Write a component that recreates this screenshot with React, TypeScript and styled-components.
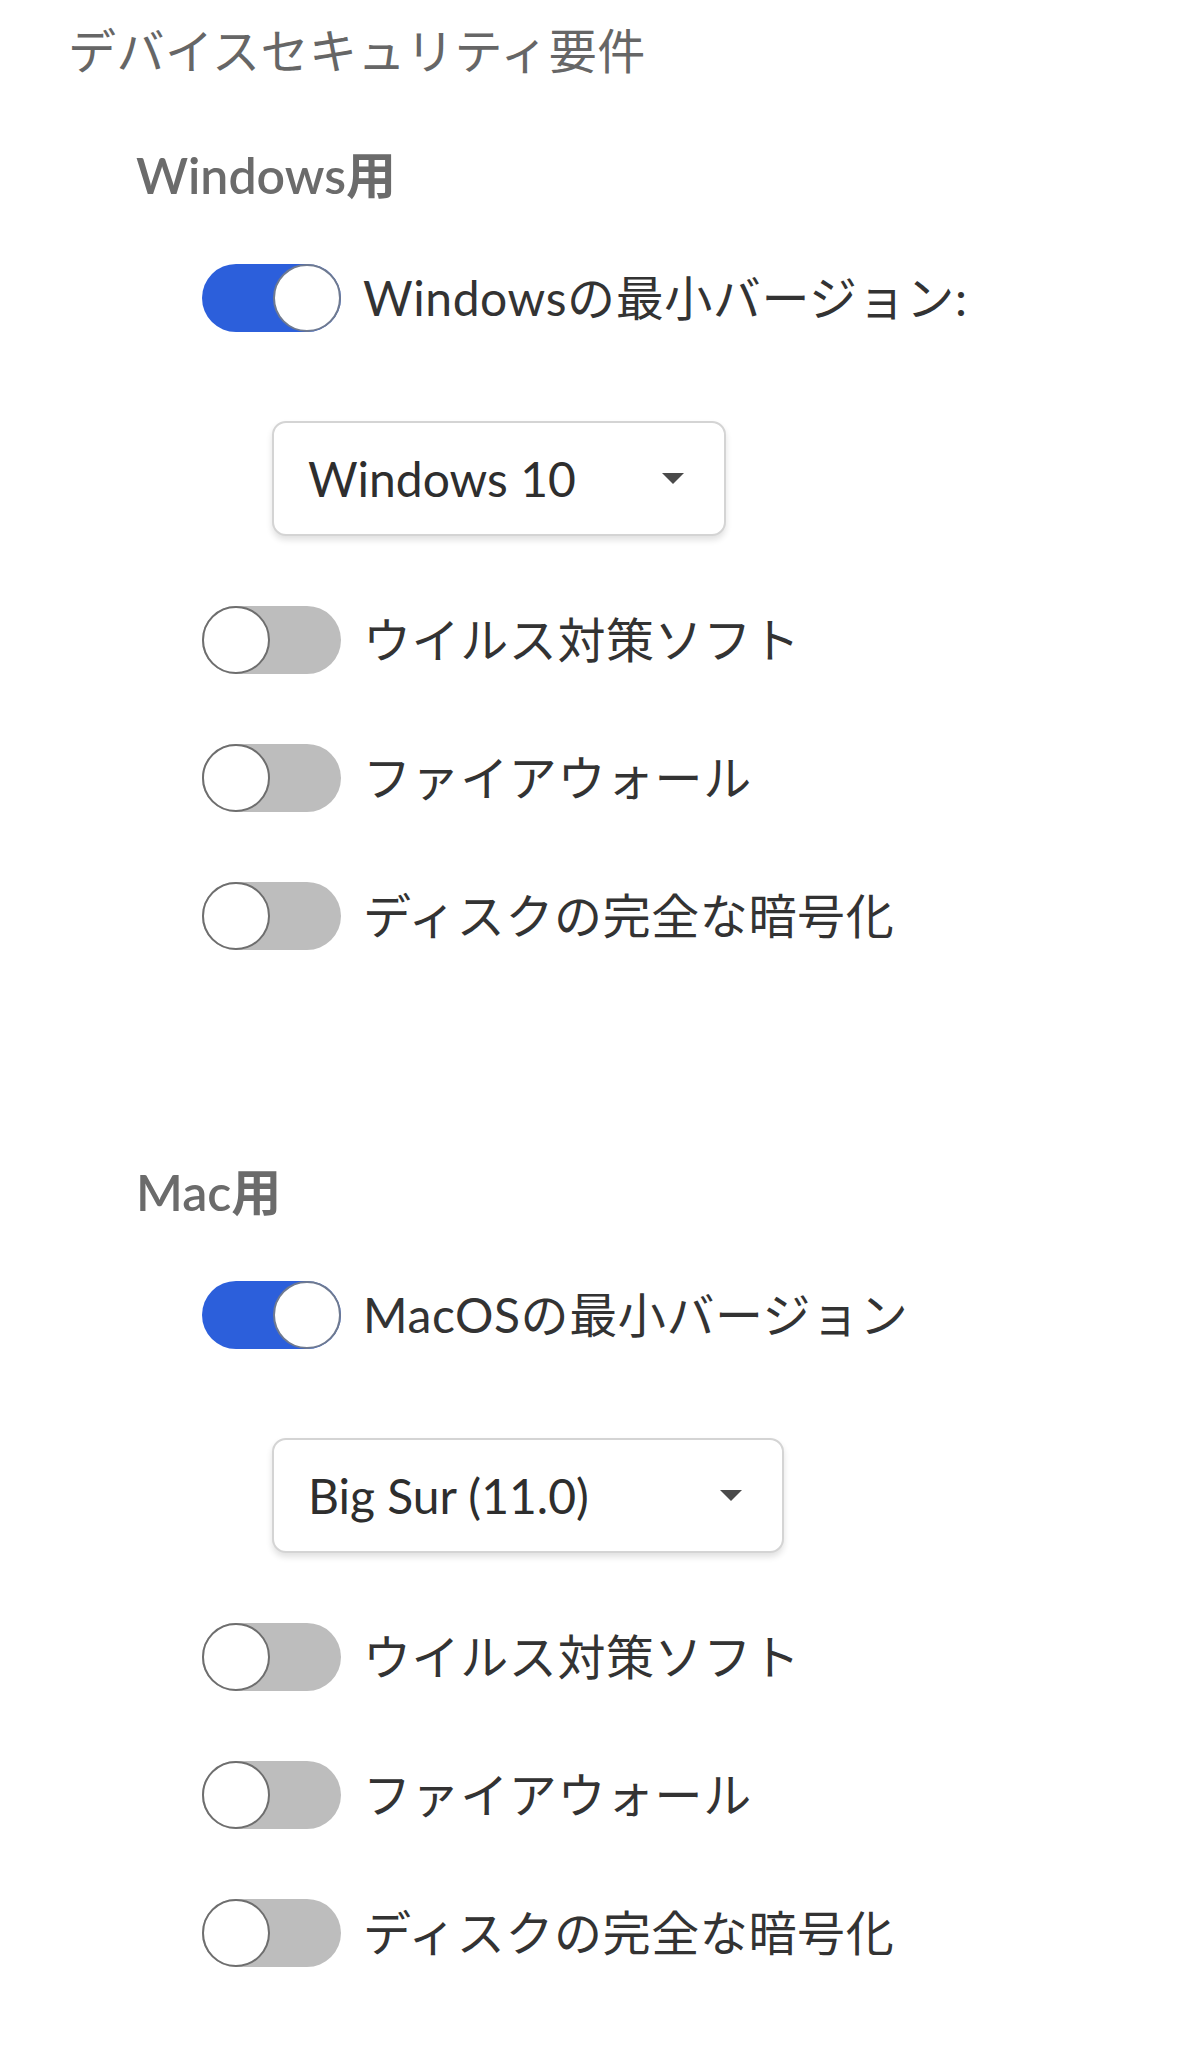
import * as React from 'react';
import styled, { createGlobalStyle } from 'styled-components';

const GlobalStyle = createGlobalStyle`
  body {
    margin: 0;
    background: #ffffff;
    font-family: Lato, 'Noto Sans CJK JP', sans-serif;
  }
`;

const Page = styled.div`
  padding: 20px 0 0 68px;
  display: flex;
  flex-direction: column;
`;
const Title = styled.h2`
  margin: 0;
  font-size: 48px;
  line-height: 62px;
  letter-spacing: 0.5px;
  font-weight: normal;
  color: #666666;
`;
const Section = styled.section<{ $gap: number }>`
  margin-top: ${(p) => p.$gap}px;
  padding-left: 68px;
  display: flex;
  flex-direction: column;
`;
const Heading = styled.h3`
  margin: 0;
  font-size: 50px;
  line-height: 62px;
  font-weight: 600;
  color: #6b6b6b;
`;
const List = styled.div`
  margin-top: 58px;
  padding-left: 66px;
  display: flex;
  flex-direction: column;
  gap: 70px;
`;
const Row = styled.label`
  display: flex;
  align-items: center;
  gap: 22px;
  font-size: 48px;
  letter-spacing: 0.6px;
  color: #333333;
  line-height: 68px;
`;
const Track = styled.span<{ $on: boolean }>`
  flex: none;
  width: 139px;
  height: 68px;
  border-radius: 34px;
  background: ${(p) => (p.$on ? '#2c5fdb' : '#bdbdbd')};
  display: flex;
  justify-content: ${(p) => (p.$on ? 'flex-end' : 'flex-start')};
`;
const Thumb = styled.span<{ $on: boolean }>`
  width: 68px;
  height: 68px;
  box-sizing: border-box;
  border-radius: 50%;
  background: #ffffff;
  border: 2px solid ${(p) => (p.$on ? '#6f7a90' : '#6e6e6e')};
`;
const SelectWrap = styled.div`
  margin-top: 89px;
  padding-left: 70px;
`;
const Select = styled.div<{ $w: number }>`
  width: ${(p) => p.$w}px;
  height: 115px;
  box-sizing: border-box;
  border: 2px solid #d4d4d4;
  border-radius: 14px;
  box-shadow: 0 4px 6px rgba(0, 0, 0, 0.12);
  background: #ffffff;
  display: flex;
  align-items: center;
  justify-content: space-between;
  padding: 0 40px 0 34px;
  font-size: 48px;
  color: #2e2e2e;
`;
const Caret = styled.svg`
  width: 22px;
  height: 11px;
  flex: none;
`;

const Toggle = ({ on }: { on: boolean }) => (
  <Track $on={on}>
    <Thumb $on={on} />
  </Track>
);

interface Item {
  label: string;
  on: boolean;
}

const OsBlock = ({
  heading,
  first,
  version,
  width,
  items,
  gap,
}: {
  heading: string;
  first: string;
  version: string;
  width: number;
  items: Item[];
  gap: number;
}) => (
  <Section $gap={gap}>
    <Heading>{heading}</Heading>
    <List>
      <div>
        <Row>
          <Toggle on />
          {first}
        </Row>
        <SelectWrap>
          <Select $w={width}>
            <span>{version}</span>
            <Caret viewBox="0 0 22 11">
              <path d="M0 0 L22 0 L11 11 Z" fill="#4a4a4a" />
            </Caret>
          </Select>
        </SelectWrap>
      </div>
      {items.map((item) => (
        <Row key={item.label}>
          <Toggle on={item.on} />
          {item.label}
        </Row>
      ))}
    </List>
  </Section>
);

const extras: Item[] = [
  { label: 'ウイルス対策ソフト', on: false },
  { label: 'ファイアウォール', on: false },
  { label: 'ディスクの完全な暗号化', on: false },
];

export default function App() {
  return (
    <>
      <GlobalStyle />
      <Page>
        <Title>デバイスセキュリティ要件</Title>
        <OsBlock
          gap={62}
          heading="Windows用"
          first="Windowsの最小バージョン:"
          version="Windows 10"
          width={454}
          items={extras}
        />
        <OsBlock
          gap={211}
          heading="Mac用"
          first="MacOSの最小バージョン"
          version="Big Sur (11.0)"
          width={512}
          items={extras}
        />
      </Page>
    </>
  );
}
